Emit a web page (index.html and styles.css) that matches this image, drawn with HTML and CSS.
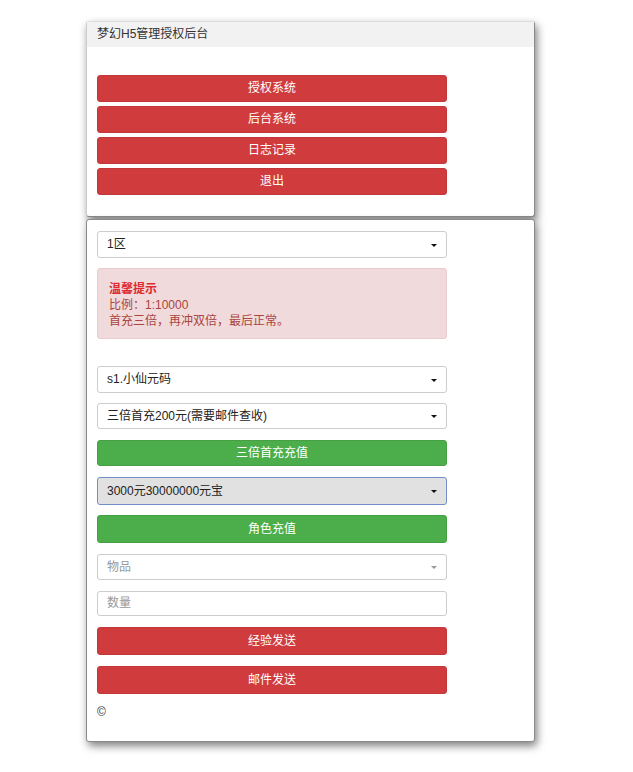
FILE: index.html
```html
<!DOCTYPE html>
<html lang="zh-CN">
<head>
<meta charset="utf-8">
<title>梦幻H5管理授权后台</title>
<link rel="stylesheet" href="styles.css">
</head>
<body>
<div class="page">
  <section class="panel panel-top">
    <div class="panel-heading">梦幻H5管理授权后台</div>
    <div class="panel-body nav-body">
      <button class="btn btn-red">授权系统</button>
      <button class="btn btn-red">后台系统</button>
      <button class="btn btn-red">日志记录</button>
      <button class="btn btn-red">退出</button>
    </div>
  </section>
  <section class="panel panel-main">
    <div class="panel-body form-body">
      <div class="select s-zone"><span>1区</span><i class="caret"></i></div>
      <div class="alert">
        <div class="alert-title">温馨提示</div>
        <div>比例：1:10000</div>
        <div>首充三倍，再冲双倍，最后正常。</div>
      </div>
      <div class="select s-role"><span>s1.小仙元码</span><i class="caret"></i></div>
      <div class="select s-pack"><span>三倍首充200元(需要邮件查收)</span><i class="caret"></i></div>
      <button class="btn btn-green b-first">三倍首充充值</button>
      <div class="select select-focus s-amount"><span>3000元30000000元宝</span><i class="caret"></i></div>
      <button class="btn btn-green b-role">角色充值</button>
      <div class="select s-item"><span class="ph">物品</span><i class="caret caret-light"></i></div>
      <div class="input s-qty"><span class="ph">数量</span></div>
      <button class="btn btn-red b-exp">经验发送</button>
      <button class="btn btn-red b-mail">邮件发送</button>
      <div class="copy">©</div>
    </div>
  </section>
</div>
</body>
</html>
```
FILE: styles.css
```css
* { box-sizing: border-box; }
html, body { margin: 0; padding: 0; background: #fff; }
body {
  font-family: "Liberation Sans", Arial, "Noto Sans CJK SC", sans-serif;
  font-size: 12px;
  color: #333;
}
.page {
  width: 449px;
  margin-left: 86px;
  padding-top: 21px;
  padding-bottom: 30px;
}
.panel {
  background: #fff;
  border: 1px solid #8a8a8a;
  border-radius: 3px;
  box-shadow: 2px 4px 9px rgba(0, 0, 0, 0.5);
}
.panel-top { border-top-color: #ddd; border-left-color: #ccc; }
.panel-main { margin-top: 2px; }
.panel-heading {
  height: 25px;
  line-height: 25px;
  padding-left: 10px;
  background: #f2f2f2;
  color: #333;
}
.panel-body {
  padding-left: 10px;
  width: 360px;
  display: flex;
  flex-direction: column;
}
.nav-body {
  padding-top: 28px;
  padding-bottom: 21px;
  gap: 4px;
}
.btn {
  display: block;
  width: 350px;
  height: 27px;
  margin: 0;
  padding: 0;
  border: 1px solid #c2373a;
  border-radius: 3px;
  font: inherit;
  color: #fff;
  text-align: center;
  line-height: 25px;
  cursor: pointer;
}
.btn-red { background: #d03b3e; }
.btn-green { background: #4cad4b; border-color: #45a044; }
.form-body {
  padding-top: 11px;
  padding-bottom: 21px;
}
.select, .input {
  position: relative;
  width: 350px;
  height: 27px;
  border: 1px solid #ccc;
  border-radius: 3px;
  background: #fff;
  padding-left: 9px;
  line-height: 25px;
  color: #222;
}
.select-focus {
  background: #e1e1e1;
  border: 1px solid #6f8fc6;
  height: 28px;
  line-height: 26px;
}
.caret {
  position: absolute;
  right: 9px;
  top: 50%;
  margin-top: -1px;
  width: 0;
  height: 0;
  border-left: 3px solid transparent;
  border-right: 3px solid transparent;
  border-top: 3px solid #111;
}
.caret-light { border-top-color: #999; }
.ph { color: #999; }
.alert {
  margin-top: 10px;
  width: 350px;
  height: 71px;
  background: #f1dadb;
  border: 1px solid #ebcccd;
  border-radius: 3px;
  padding: 12px 11px 0;
  color: #a94442;
  line-height: 16px;
}
.alert-title { color: #dc2a30; font-weight: bold; }
.s-role { margin-top: 27px; }
.s-pack { margin-top: 10px; height: 26px; line-height: 24px; }
.b-first { margin-top: 11px; height: 26px; line-height: 24px; }
.s-amount { margin-top: 11px; }
.b-role { margin-top: 10px; height: 28px; line-height: 26px; }
.s-item { margin-top: 11px; height: 26px; line-height: 24px; }
.s-qty { margin-top: 11px; height: 25px; line-height: 23px; }
.b-exp { margin-top: 11px; height: 28px; line-height: 26px; }
.b-mail { margin-top: 11px; height: 28px; line-height: 26px; }
.copy {
  margin-top: 10px;
  height: 16px;
  line-height: 16px;
  color: #333;
}
```
